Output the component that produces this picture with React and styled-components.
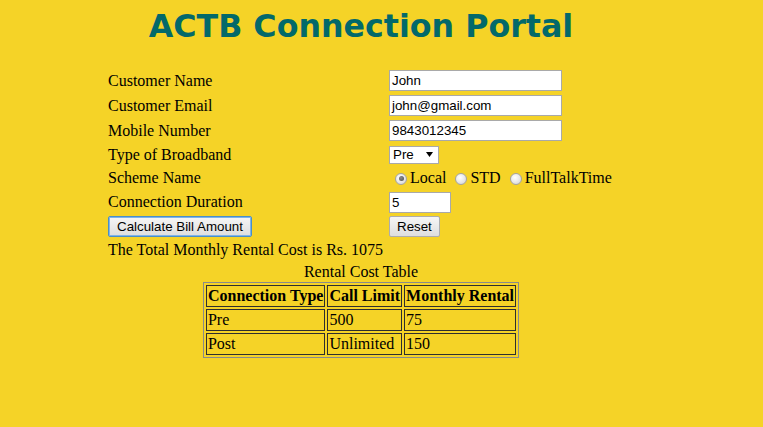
import React from "react";
import styled, { createGlobalStyle } from "styled-components";

const Global = createGlobalStyle`
  html, body { background: #f5d327; }
  body {
    margin: 8px;
    font-family: "Liberation Serif", "Times New Roman", serif;
    font-size: 16px;
    color: #000;
  }
`;

const Wrapper = styled.div`
  width: 506px;
  margin-left: 100px;
`;

const Title = styled.h1`
  margin: 0 0 23px;
  font-family: "DejaVu Sans", Verdana, sans-serif;
  font-weight: bold;
  font-size: 31.7px;
  line-height: 37px;
  color: #03696a;
  text-align: center;
  white-space: nowrap;
`;

const Form = styled.div`
  display: grid;
  grid-template-columns: 281px auto;
  grid-template-rows: 25px 25px 25px 23px 24px 24px 25px;
  align-items: center;
`;

const Label = styled.div`
  line-height: 18px;
  white-space: nowrap;
`;

const TextInput = styled.div`
  box-sizing: border-box;
  width: ${(p) => p.$w}px;
  height: 21px;
  border: 1px solid #a9a9a9;
  background: #fff;
  font-family: "Liberation Sans", Arial, sans-serif;
  font-size: 13.333px;
  line-height: 19px;
  padding: 0 2px;
  color: #000;
`;

const Select = styled.div`
  box-sizing: border-box;
  width: 50px;
  height: 18px;
  border: 1px solid #a9a9a9;
  background: #fff;
  display: flex;
  align-items: center;
  justify-content: space-between;
  padding: 0 5px 0 3px;
  font-family: "Liberation Sans", Arial, sans-serif;
  font-size: 13.333px;
`;

const RadioGroup = styled.div`
  display: flex;
  align-items: center;
  white-space: nowrap;
`;

const RadioOption = styled.label`
  display: flex;
  align-items: center;
  margin-right: 4px;
  line-height: 18px;
`;

const RadioCircle = styled.span`
  box-sizing: border-box;
  width: 12px;
  height: 12px;
  margin: 1px 3px 0 ${(p) => (p.$first ? 6 : 5)}px;
  border-radius: 50%;
  border: 1px solid #a3a3a3;
  background: radial-gradient(circle at 40% 35%, #ffffff 0%, #ececec 45%, #cfcfcf 100%);
  display: flex;
  align-items: center;
  justify-content: center;
  &::after {
    content: "";
    display: ${(p) => (p.$checked ? "block" : "none")};
    width: 5px;
    height: 5px;
    border-radius: 50%;
    background: radial-gradient(circle at 40% 35%, #8a8a8a 0%, #4d4d4d 100%);
  }
`;

const ButtonRow = styled.div`
  display: flex;
  align-items: center;
`;

const Button = styled.button`
  box-sizing: border-box;
  height: 21px;
  padding: 0 ${(p) => (p.$focus ? 8 : 7)}px;
  border: 1px solid ${(p) => (p.$focus ? "#4a8fc8" : "#adadad")};
  box-shadow: ${(p) => (p.$focus ? "inset 0 0 0 1px #7eb4ea" : "none")};
  border-radius: 2px;
  background: linear-gradient(#f6f6f6, #dedede);
  font-family: "Liberation Sans", Arial, sans-serif;
  font-size: 13.333px;
  color: #000;
  line-height: 19px;
`;

const Total = styled.div`
  margin-top: 2px;
  line-height: 18px;
`;

const TableBlock = styled.div`
  margin-top: 4px;
  display: flex;
  flex-direction: column;
  align-items: center;
`;

const Caption = styled.div`
  line-height: 18px;
  margin-bottom: 1px;
`;

const Table = styled.table`
  border: 1px solid #8a8a8a;
  border-spacing: 2px;
  border-collapse: separate;
`;

const Th = styled.th`
  border: 1px solid #2e2e2e;
  padding: 1px;
  font-weight: bold;
  text-align: left;
  line-height: 18px;
  white-space: nowrap;
`;

const Td = styled.td`
  border: 1px solid #2e2e2e;
  padding: 1px;
  line-height: 18px;
  text-align: left;
`;

const rows = [
  ["Pre", "500", "75"],
  ["Post", "Unlimited", "150"],
];

export default function App() {
  return (
    <>
      <Global />
      <Wrapper>
        <Title>ACTB Connection Portal</Title>
        <Form>
          <Label>Customer Name</Label>
          <TextInput $w={173}>John</TextInput>
          <Label>Customer Email</Label>
          <TextInput $w={173}>john@gmail.com</TextInput>
          <Label>Mobile Number</Label>
          <TextInput $w={173}>9843012345</TextInput>
          <Label>Type of Broadband</Label>
          <div>
            <Select>
              <span>Pre</span>
              <svg width="7" height="5" viewBox="0 0 7 5">
                <path d="M0 0 L7 0 L3.5 5 Z" fill="#000" />
              </svg>
            </Select>
          </div>
          <Label>Scheme Name</Label>
          <RadioGroup>
            <RadioOption>
              <RadioCircle $first $checked />
              Local
            </RadioOption>
            <RadioOption>
              <RadioCircle />
              STD
            </RadioOption>
            <RadioOption>
              <RadioCircle />
              FullTalkTime
            </RadioOption>
          </RadioGroup>
          <Label>Connection Duration</Label>
          <TextInput $w={62}>5</TextInput>
          <ButtonRow>
            <Button $focus>Calculate Bill Amount</Button>
          </ButtonRow>
          <ButtonRow>
            <Button>Reset</Button>
          </ButtonRow>
        </Form>
        <Total>The Total Monthly Rental Cost is Rs. 1075</Total>
        <TableBlock>
          <Caption>Rental Cost Table</Caption>
          <Table>
            <thead>
              <tr>
                <Th>Connection Type</Th>
                <Th>Call Limit</Th>
                <Th>Monthly Rental</Th>
              </tr>
            </thead>
            <tbody>
              {rows.map((r) => (
                <tr key={r[0]}>
                  {r.map((c) => (
                    <Td key={c}>{c}</Td>
                  ))}
                </tr>
              ))}
            </tbody>
          </Table>
        </TableBlock>
      </Wrapper>
    </>
  );
}
